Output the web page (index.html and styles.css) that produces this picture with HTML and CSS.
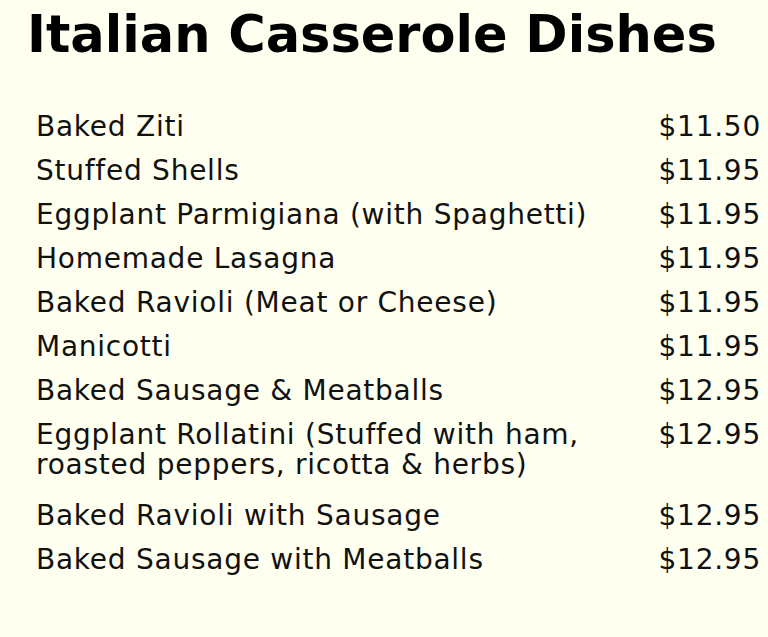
FILE: index.html
```html
<!DOCTYPE html>
<html>
<head>
<meta charset="utf-8">
<link rel="stylesheet" href="styles.css">
</head>
<body>
<div class="menu">
  <h1 class="title">Italian Casserole Dishes</h1>
  <table class="items">
    <tr><td class="name">Baked Ziti</td><td class="price">$11.50</td></tr>
    <tr><td class="name">Stuffed Shells</td><td class="price">$11.95</td></tr>
    <tr><td class="name">Eggplant Parmigiana (with Spaghetti)</td><td class="price">$11.95</td></tr>
    <tr><td class="name">Homemade Lasagna</td><td class="price">$11.95</td></tr>
    <tr><td class="name">Baked Ravioli (Meat or Cheese)</td><td class="price">$11.95</td></tr>
    <tr><td class="name">Manicotti</td><td class="price">$11.95</td></tr>
    <tr><td class="name">Baked Sausage &amp; Meatballs</td><td class="price">$12.95</td></tr>
    <tr class="tall"><td class="name">Eggplant Rollatini (Stuffed with ham,<br>roasted peppers, ricotta &amp; herbs)</td><td class="price">$12.95</td></tr>
    <tr><td class="name">Baked Ravioli with Sausage</td><td class="price">$12.95</td></tr>
    <tr><td class="name">Baked Sausage with Meatballs</td><td class="price">$12.95</td></tr>
  </table>
</div>
</body>
</html>
```
FILE: styles.css
```css
html, body {
  margin: 0;
  padding: 0;
  background: #fffff0;
}
body {
  font-family: "DejaVu Sans", sans-serif;
  color: #111;
}
.menu {
  padding: 5px 7px 0 27px;
}
.title {
  margin: 0 0 40px 0;
  font-size: 51px;
  font-weight: bold;
  line-height: 60px;
  color: #000;
}
.items {
  width: 100%;
  border-collapse: collapse;
  font-size: 28px;
  letter-spacing: 0.75px;
}
.items td {
  padding: 7px 0 7px 9px;
  vertical-align: top;
  line-height: 30px;
}
.items .price {
  text-align: right;
  white-space: nowrap;
}
.items .tall td {
  padding-bottom: 14px;
}
```
